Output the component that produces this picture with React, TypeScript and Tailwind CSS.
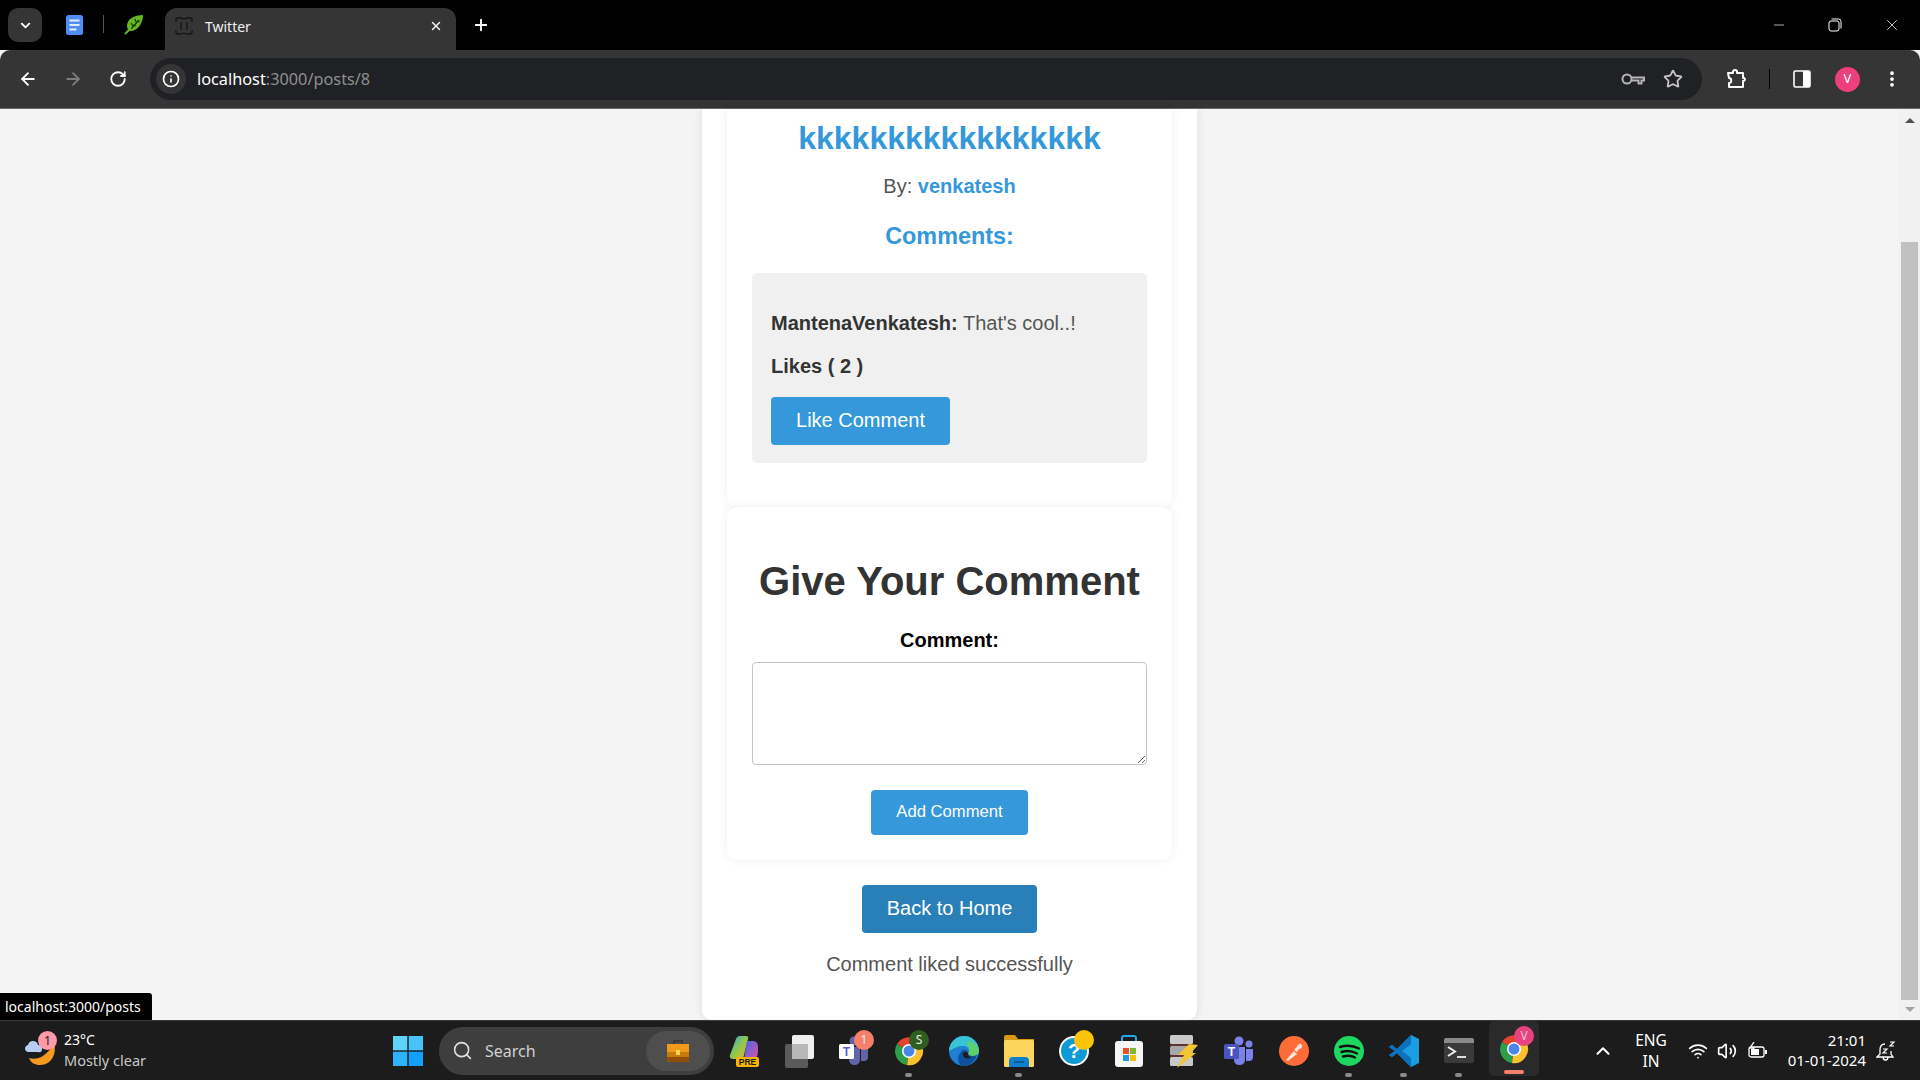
import { ArrowLeft, ArrowRight, ChevronDown, ChevronUp, EllipsisVertical, Info, Minus, Plus, RotateCw, Search, Star, Volume2, Wifi, X } from "lucide-react";

const UI_FONT = "font-['Noto_Sans','Open_Sans',sans-serif]";

const DocsIcon = () => (
  <svg width="20" height="20" viewBox="0 0 20 20">
    <rect x="1" y="0" width="17" height="20" rx="2.5" fill="#4f8df5" />
    <path d="M4.5 5.5h10M4.5 10h10M4.5 14.5h7" stroke="#e4edff" strokeWidth="2" />
  </svg>
);

const LeafIcon = () => (
  <svg width="20" height="20" viewBox="0 0 20 20">
    <path d="M19 0C10 0 3 4 3 11c0 2 1 4 3 5 8 0 13-8 13-16z" fill="#65b81f" />
    <path d="M7 14l8-9M7 8l2 3M11 4l1 3M12 11l-3-1M16 7l-3-1" stroke="#173d0a" strokeWidth="1.300" fill="none" />
    <path d="M1 19l6-6" stroke="#65b81f" strokeWidth="2" />
  </svg>
);

const Favicon = () => (
  <svg width="18" height="18" viewBox="0 0 18 18" fill="none" stroke="#141414" strokeWidth="1.3">
    <path d="M1 5V3q0-2 2-2h3l3 1 3-1h3q2 0 2 2v2M1 13v2q0 2 2 2h3l3-1 3 1h3q2 0 2-2v-2M6 5v8M12 5v8" />
  </svg>
);

const KeyIcon = () => (
  <svg width="24" height="14" viewBox="0 0 24 14" fill="none" stroke="#b5b5b5" strokeWidth="2">
    <circle cx="6" cy="7" r="4.500" />
    <path d="M10.500 5.500H23v3h-2.500v3h-3v-3h-7" />
  </svg>
);

const Puzzle = () => (
  <svg width="22" height="22" viewBox="0 0 22 22" fill="none" stroke="#fff" strokeWidth="2" strokeLinejoin="round">
    <path d="M3 5h5c-1-4 5-4 4 0h6v5c2-1 3 3 0 3v6H4v-4c3 0 3-5 0-5z" />
  </svg>
);

const SidePanel = () => (
  <svg width="18" height="18" viewBox="0 0 18 18">
    <rect x="1" y="1" width="16" height="16" rx="1.5" fill="none" stroke="#fff" strokeWidth="1.6" />
    <rect x="10" y="1" width="7" height="16" fill="#fff" />
  </svg>
);

const RestoreIcon = () => (
  <svg width="14" height="14" viewBox="0 0 14 14" fill="none" stroke="#fff" strokeWidth="1">
    <rect x="1" y="3" width="10" height="10" rx="2" />
    <path d="M3.5 1h7a2.5 2.5 0 0 1 2.5 2.500v7" />
  </svg>
);

const ChromeIcon = () => (
  <svg width="30" height="30" viewBox="0 0 30 30">
    <path d="M15 15L3 8a14 14 0 0 1 24 0z" fill="#e5432f" />
    <path d="M15 15L3 8a14 14 0 0 0 10 21z" fill="#2e9e48" />
    <path d="M15 15l12-7a14 14 0 0 1-14 21z" fill="#fbc02d" />
    <circle cx="15" cy="15" r="7" fill="#fff" />
    <circle cx="15" cy="15" r="5.500" fill="#4a86e8" />
  </svg>
);

const CopilotIcon = () => (
  <svg width="30" height="32" viewBox="0 0 30 32">
    <defs>
      <linearGradient id="cop" x1="0" y1="0" x2="1" y2="1">
        <stop offset="0" stopColor="#2aa7e8" />
        <stop offset="0.5" stopColor="#8fc84a" />
        <stop offset="1" stopColor="#e8b52a" />
      </linearGradient>
      <linearGradient id="cop2" x1="0" y1="0" x2="1" y2="1">
        <stop offset="0" stopColor="#3a6de0" />
        <stop offset="1" stopColor="#e04fb0" />
      </linearGradient>
    </defs>
    <path d="M11 1h6q3 0 2 3l-5 20H4Q0 24 1 20L7 4q1-3 4-3z" fill="url(#cop)" />
    <path d="M18 6h6q5 0 5 6v4q0 8-6 8h-8z" fill="url(#cop2)" />
    <rect x="7" y="22" width="23" height="10" rx="2" fill="#f5b50a" />
    <text x="18.500" y="30" textAnchor="middle" fontSize="8.500" fontWeight="700" fontFamily="Liberation Sans" fill="#1c1c1c">PRE</text>
  </svg>
);

const TaskViewIcon = () => (
  <svg width="30" height="34" viewBox="0 0 30 34">
    <rect x="1" y="10" width="23" height="24" rx="2" fill="#5a5a5a" />
    <rect x="8" y="1" width="22" height="24" rx="2" fill="#efefef" />
    <rect x="8" y="10" width="16" height="15" fill="#b8b8b8" />
  </svg>
);

const TeamsIcon = ({ tile, body }: { tile: string; body: string }) => (
  <svg width="30" height="30" viewBox="0 0 30 30">
    <circle cx="15" cy="5" r="4.500" fill={body} />
    <circle cx="25" cy="8" r="3.500" fill={body} />
    <path d="M10 11h11v12q0 6-5.500 6T10 23z" fill={body} />
    <path d="M22 13h7v8q0 4-4 4h-3z" fill={body} />
    <rect x="0" y="8" width="15" height="15" rx="1.500" fill={tile} />
    <text x="7.500" y="20" textAnchor="middle" fontSize="12" fontWeight="700" fontFamily="Liberation Sans" fill={tile === "#fff" ? "#5b5fc7" : "#fff"}>T</text>
  </svg>
);

const EdgeIcon = () => (
  <svg width="30" height="30" viewBox="0 0 30 30">
    <circle cx="15" cy="15" r="15" fill="#1f7fd1" />
    <path d="M0 15a15 15 0 0 1 30 0c0 3-3 5-7 5-3 0-4-1-4-2 2-1 2-8-5-8-5 0-9 2-14 5z" fill="#36c4d6" />
    <path d="M18 5c6 0 11 4 12 10 0 3-3 5-7 5-3 0-4-1-4-2 2-2 1-9-1-13z" fill="#5ed06a" />
    <path d="M12 16c1-3 7-3 7 1 0 3 5 4 9 2-2 6-7 11-13 11-6 0-8-9-3-14z" fill="#0f4f9c" />
    <path d="M14 17c2-2 5-1 5 1 0 2 1 3 3 3-3 3-9 1-8-4z" fill="#1c1c1c" />
  </svg>
);

const FolderIcon = () => (
  <svg width="30" height="32" viewBox="0 0 30 32">
    <path d="M0 2q0-2 2-2h9l3 4h16v8H0z" fill="#d59a0f" />
    <rect x="0" y="5" width="30" height="27" rx="1.500" fill="#fbd55e" />
    <path d="M5 32v-6q0-4 4-4h12q4 0 4 4v6z" fill="#0f7fd0" />
    <path d="M10 27h10" stroke="#0a4d86" strokeWidth="1.500" />
  </svg>
);

const HelpIcon = () => (
  <svg width="30" height="30" viewBox="0 0 30 30">
    <circle cx="15" cy="15" r="14" fill="#0f9ad6" stroke="#fff" strokeWidth="2" />
    <text x="15" y="22" textAnchor="middle" fontSize="20" fontWeight="700" fontFamily="Liberation Sans" fill="#fff">?</text>
  </svg>
);

const StoreIcon = () => (
  <svg width="30" height="32" viewBox="0 0 30 32">
    <path d="M8 8V3q0-2 2-2h10q2 0 2 2v5" fill="none" stroke="#22a7e8" strokeWidth="2" />
    <rect x="1" y="6" width="28" height="26" rx="3" fill="#f5f5f5" />
    <rect x="9" y="13" width="6" height="6" fill="#e8502c" />
    <rect x="16" y="13" width="6" height="6" fill="#7cb82a" />
    <rect x="9" y="20" width="6" height="6" fill="#1b9de2" />
    <rect x="16" y="20" width="6" height="6" fill="#fbbc0a" />
  </svg>
);

const DbIcon = () => (
  <svg width="30" height="34" viewBox="0 0 30 34">
    <rect x="1" y="1" width="23" height="9" rx="1.500" fill="#c9c9c9" />
    <rect x="1" y="12" width="23" height="9" rx="1.500" fill="#a8a8a8" />
    <rect x="1" y="23" width="23" height="9" rx="1.500" fill="#c9c9c9" />
    <path d="M1 11h23M1 22h23" stroke="#a84b4b" strokeWidth="1" />
    <path d="M20 10l9 1-7 8h5L8 34l7-13H9z" fill="#f2c531" />
  </svg>
);

const PostmanIcon = () => (
  <svg width="30" height="30" viewBox="0 0 30 30">
    <circle cx="15" cy="15" r="15" fill="#ff6c37" />
    <path d="M7 24l8-9 3 3-9 7zM15 14l5-6q3-1 3 2t-3 3l-2 3z" fill="#fbe3d8" />
  </svg>
);

const SpotifyIcon = () => (
  <svg width="30" height="30" viewBox="0 0 30 30">
    <circle cx="15" cy="15" r="15" fill="#1ed760" />
    <path d="M6 11q10-3 19 1.500M7.500 16q8-2.500 15.500 1.500M9 20.500q7-2 12 1" fill="none" stroke="#111" strokeWidth="2.400" strokeLinecap="round" />
  </svg>
);

const VsCodeIcon = () => (
  <svg width="30" height="32" viewBox="0 0 30 32">
    <path d="M22 0l8 4v24l-8 4L8 18l-5 4-3-2 6-4-6-4 3-2 5 4z" fill="#1b9de2" />
    <path d="M22 0v9l-9 7 9 7v9L8 18l-5 4-3-2 6-4-6-4 3-2 5 4z" fill="#0b72bd" />
  </svg>
);

const TerminalIcon = () => (
  <svg width="30" height="26" viewBox="0 0 30 26">
    <rect x="0" y="0" width="30" height="25" rx="2" fill="#3a3a3a" />
    <path d="M0 2q0-2 2-2h26q2 0 2 2v3H0z" fill="#8a8a8a" />
    <path d="M4 9l7 4.500-7 4.500" fill="none" stroke="#eee" strokeWidth="2" />
    <path d="M13 19h9" stroke="#ddd" strokeWidth="2" />
  </svg>
);

const BriefcaseIcon = () => (
  <svg width="24" height="24" viewBox="0 0 24 24">
    <path d="M8 5V2h8v3" fill="none" stroke="#3a3a3a" strokeWidth="2" />
    <rect x="1" y="5" width="22" height="18" rx="1.500" fill="#c77b0e" />
    <rect x="1" y="5" width="22" height="8" fill="#ef9a1a" />
    <rect x="1" y="18" width="22" height="5" fill="#8f4f08" />
    <rect x="10" y="11" width="4" height="5" fill="#f7d64a" />
  </svg>
);

const WeatherIcon = () => (
  <div className="relative h-[36px] w-[36px] shrink-0">
    <svg width="36" height="36" viewBox="0 0 36 36" className="absolute left-0 top-0">
      <path d="M30 10c3 10-2 22-14 22-5 0-9-2-11-7 9 3 19-3 25-15z" fill="#f39a1f" />
      <path d="M4 19q-3-1-3-3.500T4 12q1-4 5-4t5 4q4 0 4 4t-4 3z" fill="#b9cdf0" />
    </svg>
    <span className="absolute left-[14px] top-[-2px] flex h-[19px] w-[19px] items-center justify-center rounded-full bg-[#ff9aa8] text-[13px] leading-none text-[#222]">1</span>
  </div>
);

const WindowsLogo = () => (
  <svg width="30" height="30" viewBox="0 0 30 30">
    <rect x="0" y="0" width="14.300" height="14.300" fill="#5fd4fb" />
    <rect x="15.700" y="0" width="14.300" height="14.300" fill="#47c3fa" />
    <rect x="0" y="15.700" width="14.300" height="14.300" fill="#2db2fb" />
    <rect x="15.700" y="15.700" width="14.300" height="14.300" fill="#12a0fb" />
  </svg>
);

const Battery = () => (
  <svg width="20" height="18" viewBox="0 0 20 18" fill="none" stroke="#fff" strokeWidth="1.300">
    <rect x="1" y="5" width="15" height="10" rx="2" />
    <path d="M18 8v4" strokeWidth="2" />
    <rect x="3" y="7" width="8" height="6" fill="#fff" stroke="none" />
    <path d="M6 0L2 6h4L4 10" />
  </svg>
);

const SnoozeBell = () => (
  <svg width="20" height="22" viewBox="0 0 20 22" fill="none" stroke="#fff" strokeWidth="1.300">
    <path d="M9 4Q4 4 4 10v4l-3 3h16l-2-3v-3M7 17q0 3 2.500 3t2.500-3" />
    <path d="M7 9h4l-4 4h4M14 2h4l-4 4h4" strokeWidth="1.200" />
  </svg>
);

const TaskIcon = ({ children, dot, badge, badgeColor, badgeText }: {
  children: React.ReactNode;
  dot?: boolean;
  badge?: boolean;
  badgeColor?: string;
  badgeText?: string;
}) => (
  <div className="relative flex h-[59px] w-[55px] shrink-0 items-center justify-center">
    {children}
    {badge && (
      <span
        className="absolute left-[28px] top-[9px] flex h-[20px] w-[20px] items-center justify-center rounded-full text-[12px] text-[#e8e8e8]"
        style={{ backgroundColor: badgeColor }}
      >
        {badgeText}
      </span>
    )}
    {dot && <span className="absolute bottom-[3px] left-[24px] h-[4px] w-[7px] rounded-full bg-[#8a8a8a]" />}
  </div>
);

const BrowserChrome = () => (
  <div className={UI_FONT}>
    {/* tab strip */}
    <div className="flex h-[50px] items-end bg-black pl-[8px]">
      <div className="mb-[8px] flex h-[34px] w-[34px] items-center justify-center rounded-[10px] bg-[#353535]">
        <ChevronDown size={15} strokeWidth={3} color="#fff" />
      </div>
      <div className="mb-[15px] ml-[23px]"><DocsIcon /></div>
      <div className="mb-[17px] ml-[18px] h-[18px] w-[1px] bg-[#555]" />
      <div className="mb-[15px] ml-[20px]"><LeafIcon /></div>
      <div className="ml-[21px] flex h-[42px] w-[291px] items-center rounded-t-[12px] bg-[#353535] pb-[6px] pl-[10px] pr-[13px]">
        <Favicon />
        <span className="ml-[12px] flex-1 text-[14px] text-[#f0f0f0]">Twitter</span>
        <X size={14} strokeWidth={2.500} color="#f0f0f0" />
      </div>
      <div className="mb-[16px] ml-[16px]"><Plus size={18} strokeWidth={2.500} color="#fff" /></div>
      <div className="mb-[16px] ml-auto flex items-center gap-[41px] pr-[19px]">
        <Minus size={16} strokeWidth={1} color="#fff" />
        <RestoreIcon />
        <X size={18} strokeWidth={1} color="#fff" />
      </div>
    </div>
    {/* toolbar */}
    <div className="flex h-[59px] items-center rounded-t-[10px] border-b border-[#6a6a6a] bg-[#353535] pl-[18px] pr-[14px]">
      <ArrowLeft size={20} strokeWidth={2.200} color="#fff" />
      <ArrowRight size={20} strokeWidth={2.200} color="#7c7c7c" className="ml-[25px]" />
      <RotateCw size={18} strokeWidth={2.400} color="#fff" className="ml-[26px]" />
      <div className="ml-[23px] flex h-[42px] w-[1552px] items-center rounded-full bg-[#202124] pl-[6px] pr-[19px]">
        <div className="flex h-[30px] w-[30px] items-center justify-center rounded-full bg-[#353535]">
          <Info size={18} strokeWidth={2.200} color="#fff" />
        </div>
        <span className="ml-[11px] flex-1 text-[16.300px] leading-none text-[#8f8f8f]"><span className="text-white">localhost</span>:3000/posts/8</span>
        <div className="mr-[18px]"><KeyIcon /></div>
        <Star size={20} strokeWidth={2.200} color="#c4c4c4" />
      </div>
      <div className="ml-[23px]"><Puzzle /></div>
      <div className="ml-[22px] h-[20px] w-[1px] bg-black" />
      <div className="ml-[23px]"><SidePanel /></div>
      <div className="ml-[24px] flex h-[25px] w-[25px] items-center justify-center rounded-full bg-[#ee3f7d] text-[13px] text-white">V</div>
      <EllipsisVertical size={20} strokeWidth={2.500} color="#fff" className="ml-[22px]" />
    </div>
  </div>
);

const Page = () => (
  <div className="flex min-h-0 flex-1 justify-center font-['Liberation_Sans',Arial,sans-serif]">
    <div className="flex h-[911px] w-[495px] flex-col items-center rounded-b-[10px] bg-white shadow-[0_0_10px_rgba(0,0,0,0.1)]">
      <div className="flex h-[398px] w-[445px] shrink-0 flex-col items-center rounded-b-[10px] px-[25px] shadow-[0_0_10px_rgba(0,0,0,0.07)]">
        <h1 className="mt-[11px] text-[32px] font-bold leading-[37px] text-[#3498db]">kkkkkkkkkkkkkkkkk</h1>
        <p className="mt-[18px] text-[20px] leading-[23px] text-[#555]">By: <span className="font-bold text-[#3498db]">venkatesh</span></p>
        <h2 className="mt-[25px] text-[23.400px] font-bold leading-[27px] text-[#3498db]">Comments:</h2>
        <div className="mt-[23px] h-[190px] w-full rounded-[5px] bg-[#f0f0f0] px-[19px] pt-[39px]">
          <p className="text-[20px] leading-[23px] text-[#555]"><span className="font-bold text-[#333]">MantenaVenkatesh:</span> That's cool..!</p>
          <p className="mt-[20px] text-[20px] font-bold leading-[23px] text-[#333]">Likes ( 2 )</p>
          <button className="mt-[19px] h-[48px] w-[179px] rounded-[4px] bg-[#3498db] pb-[2px] text-[20px] text-white">Like Comment</button>
        </div>
      </div>
      <div className="relative flex h-[353px] w-[445px] shrink-0 flex-col items-center rounded-[10px] bg-white px-[25px] shadow-[0_0_10px_rgba(0,0,0,0.07)]">
        <h2 className="mt-[51px] text-[40px] font-bold leading-[46px] text-[#333]">Give Your Comment</h2>
        <label className="mt-[26px] text-[20px] font-bold leading-[21px] text-black">Comment:</label>
        <textarea className="mt-[11px] h-[103px] w-full rounded-[4px] border border-[#c4c4c4] bg-white" />
        <button className="mt-[25px] h-[45px] w-[157px] rounded-[4px] bg-[#3498db] pb-[2px] text-[16.670px] text-white">Add Comment</button>
      </div>
      <button className="mt-[25px] h-[48px] w-[175px] shrink-0 rounded-[4px] bg-[#2980b9] pb-[2px] text-[20px] text-white">Back to Home</button>
      <p className="mt-[20px] text-[20px] leading-[23px] text-[#555]">Comment liked successfully</p>
    </div>
  </div>
);

const Scrollbar = () => (
  <div className="flex w-[21px] shrink-0 flex-col items-center bg-[#f1f1f1]">
    <div className="mt-[9px] h-0 w-0 border-x-[5px] border-b-[5px] border-x-transparent border-b-[#505050]" />
    <div className="mt-[119px] h-[758px] w-[17px] bg-[#c1c1c1]" />
    <div className="mt-[7px] h-0 w-0 border-x-[5px] border-t-[5px] border-x-transparent border-t-[#a3a3a3]" />
  </div>
);

const Taskbar = () => (
  <div className={`flex h-[60px] shrink-0 items-center border-t border-[#3a3a3a] bg-[#1c1c1c] text-white ${UI_FONT}`}>
    <div className="ml-[24px] flex w-[369px] shrink-0 items-center gap-[4px]">
      <WeatherIcon />
      <div className="-mt-[1px] flex flex-col">
        <span className="text-[14px] leading-[20px]">23°C</span>
        <span className="text-[14.500px] leading-[20px] text-[#c8c8c8]">Mostly clear</span>
      </div>
    </div>
    <WindowsLogo />
    <div className="ml-[16px] flex h-[48px] w-[275px] shrink-0 items-center rounded-full bg-[#3e3e3e] pl-[13px] pr-[4px]">
      <Search size={21} strokeWidth={1.800} color="#e0e0e0" />
      <span className="ml-[12px] flex-1 text-[16px] text-[#d0d0d0]">Search</span>
      <div className="flex h-[40px] w-[64px] items-center justify-center rounded-full bg-[#4e4e4e]"><BriefcaseIcon /></div>
    </div>
    <div className="ml-[2px] flex">
      <TaskIcon><CopilotIcon /></TaskIcon>
      <TaskIcon><TaskViewIcon /></TaskIcon>
      <TaskIcon badge badgeColor="#f4806a" badgeText="1"><TeamsIcon tile="#fff" body="#6264a7" /></TaskIcon>
      <TaskIcon dot badge badgeColor="#2f5f1e" badgeText="S"><ChromeIcon /></TaskIcon>
      <TaskIcon><EdgeIcon /></TaskIcon>
      <TaskIcon dot><FolderIcon /></TaskIcon>
      <TaskIcon badge badgeColor="#fcc30b"><HelpIcon /></TaskIcon>
      <TaskIcon><StoreIcon /></TaskIcon>
      <TaskIcon><DbIcon /></TaskIcon>
      <TaskIcon><TeamsIcon tile="#4b53bc" body="#7b83eb" /></TaskIcon>
      <TaskIcon><PostmanIcon /></TaskIcon>
      <TaskIcon dot><SpotifyIcon /></TaskIcon>
      <TaskIcon dot><VsCodeIcon /></TaskIcon>
      <TaskIcon dot><TerminalIcon /></TaskIcon>
      <div className="relative ml-[3px] flex h-[55px] w-[50px] shrink-0 items-center justify-center rounded-[5px] bg-[#2a2a2a]">
        <ChromeIcon />
        <span className="absolute left-[25px] top-[5px] flex h-[20px] w-[20px] items-center justify-center rounded-full bg-[#e8437f] text-[12px] text-[#f5c6d8]">V</span>
        <span className="absolute bottom-[2px] left-[15px] h-[4px] w-[20px] rounded-full bg-[#f4806a]" />
      </div>
    </div>
    <ChevronUp size={22} strokeWidth={2.200} color="#fff" className="ml-[53px]" />
    <div className="ml-[15px] flex w-[44px] flex-col items-center text-[15.500px] leading-[21px]">
      <span>ENG</span>
      <span>IN</span>
    </div>
    <Wifi size={20} className="ml-[15px]" />
    <Volume2 size={20} className="ml-[9px]" />
    <div className="ml-[11px]"><Battery /></div>
    <div className="-mt-[2px] ml-[18px] flex w-[80px] flex-col items-end text-[15px] leading-[20px]">
      <span className="whitespace-nowrap">21:01</span>
      <span className="whitespace-nowrap">01-01-2024</span>
    </div>
    <div className="ml-[10px]"><SnoozeBell /></div>
  </div>
);

export default function App() {
  return (
    <div className="relative flex h-screen w-full flex-col overflow-hidden bg-[#f4f4f4]">
      <BrowserChrome />
      <div className="flex min-h-0 flex-1">
        <Page />
        <Scrollbar />
      </div>
      <div className={`absolute bottom-[60px] left-0 flex h-[27px] w-[152px] items-center rounded-tr-[3px] bg-black pl-[5px] text-[14px] text-white ${UI_FONT}`}>localhost:3000/posts</div>
      <Taskbar />
    </div>
  );
}
